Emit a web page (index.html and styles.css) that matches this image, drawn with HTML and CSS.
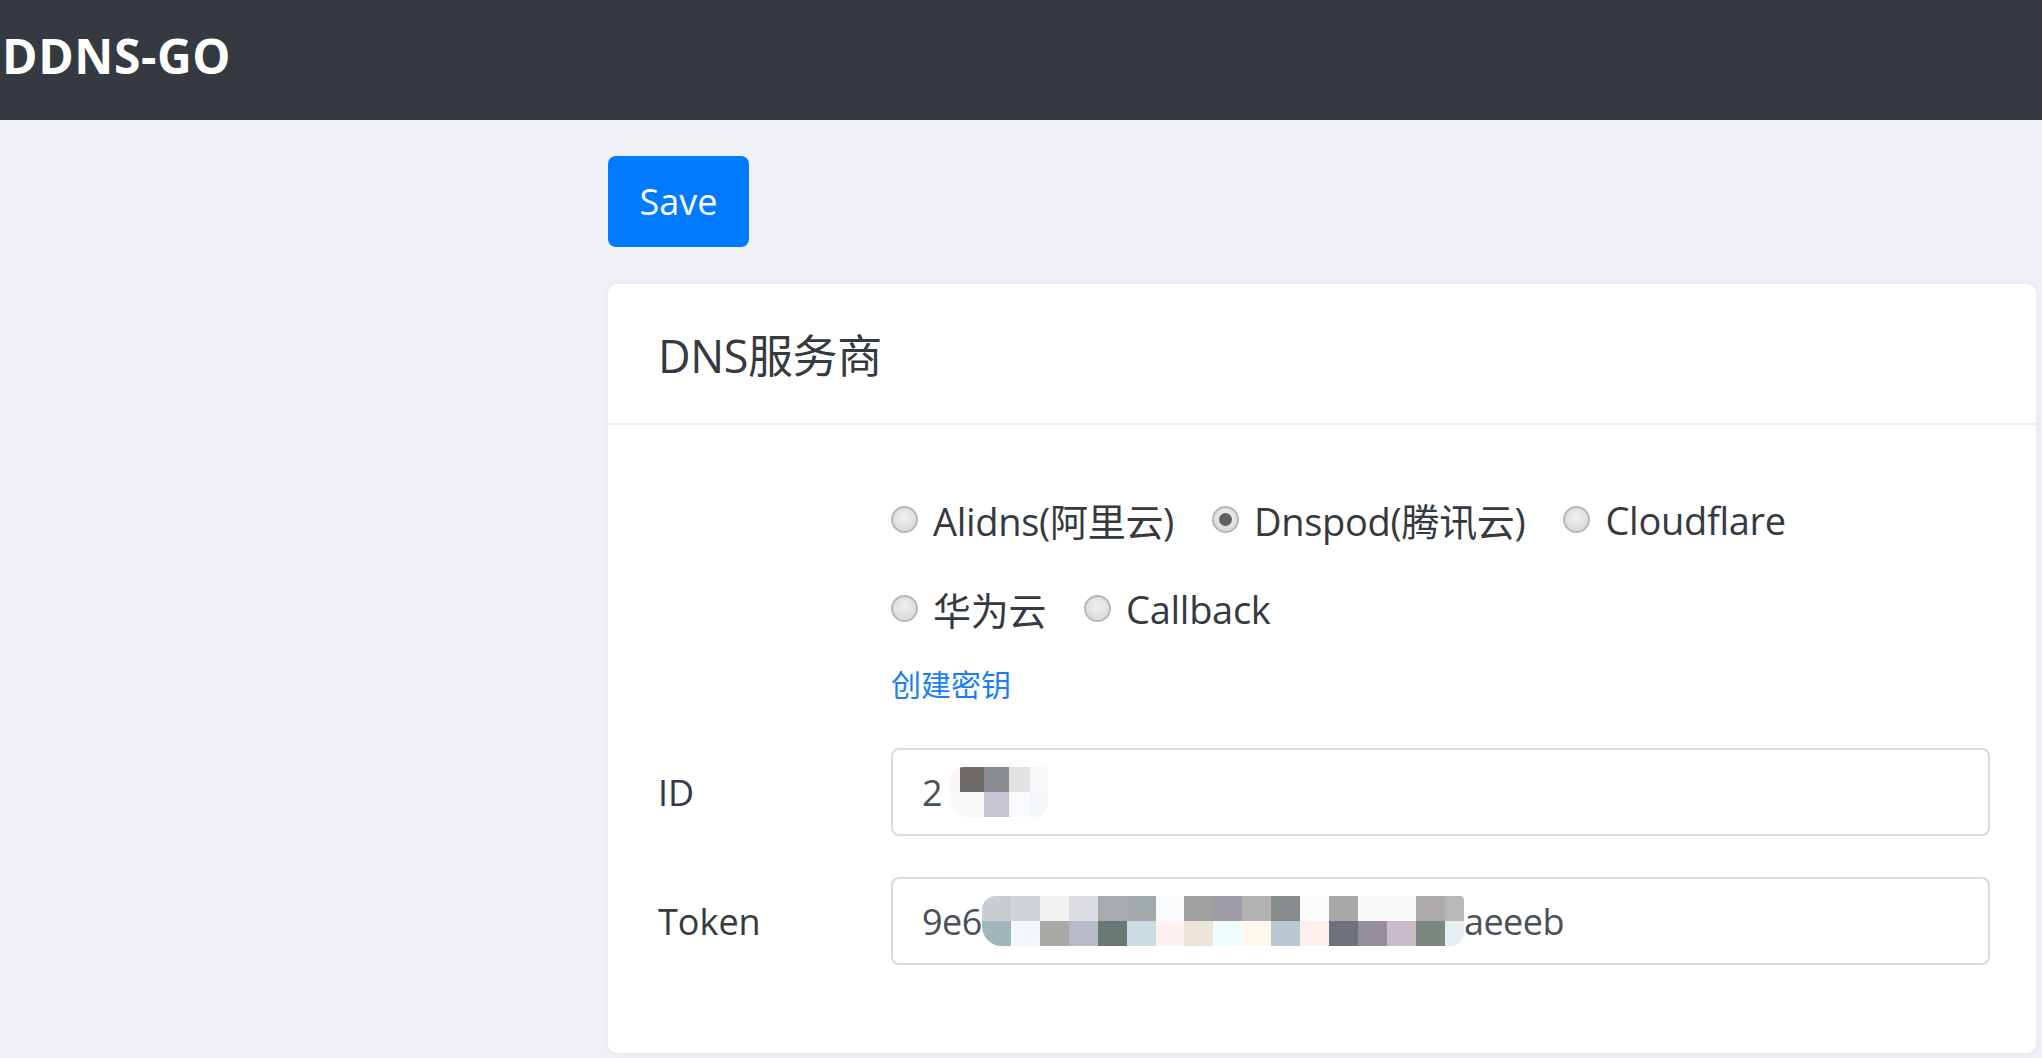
FILE: index.html
```html
<!DOCTYPE html>
<html lang="zh">
<head>
<meta charset="utf-8">
<title>DDNS-GO</title>
<link rel="stylesheet" href="styles.css">
</head>
<body>
<header class="navbar">
  <span class="brand">DDNS-GO</span>
</header>
<main class="main">
  <button class="btn-save" type="button">Save</button>
  <section class="card">
    <div class="card-header">DNS服务商</div>
    <div class="card-body">
      <div class="form-row">
        <div class="label-col"></div>
        <div class="field-col">
          <div class="radios">
            <label class="radio"><input type="radio" name="dns"><span>Alidns(阿里云)</span></label>
            <label class="radio"><input type="radio" name="dns" checked><span>Dnspod(腾讯云)</span></label>
            <label class="radio"><input type="radio" name="dns"><span>Cloudflare</span></label>
            <label class="radio"><input type="radio" name="dns"><span>华为云</span></label>
            <label class="radio"><input type="radio" name="dns"><span>Callback</span></label>
          </div>
          <a class="help-link" href="#">创建密钥</a>
        </div>
      </div>
      <div class="form-row input-row">
        <label class="label-col">ID</label>
        <div class="field-col">
          <div class="input"><span>2</span><span class="mosaic m-id"></span></div>
        </div>
      </div>
      <div class="form-row input-row">
        <label class="label-col">Token</label>
        <div class="field-col">
          <div class="input"><span>9e6</span><span class="mosaic m-token"></span><span>aeeeb</span></div>
        </div>
      </div>
    </div>
  </section>
</main>
</body>
</html>
```
FILE: styles.css
```css
* { box-sizing: border-box; }
html, body { margin: 0; padding: 0; }
body {
  background: #f0f1f6;
  font-family: "Open Sans", "Noto Sans CJK SC", sans-serif;
  color: #212529;
  height: 1058px;
  overflow: hidden;
}
.navbar {
  height: 120px;
  background: #343a40;
  display: flex;
  align-items: center;
  padding-left: 2px;
  padding-bottom: 10px;
}
.brand {
  color: #fff;
  font-family: "Open Sans", "Noto Sans", sans-serif;
  font-weight: 700;
  font-size: 48px;
  letter-spacing: 0.6px;
}
.main {
  padding: 36px 6px 0 608px;
}
.btn-save {
  display: block;
  width: 141px;
  height: 91px;
  border: none;
  border-radius: 8px;
  background: #007bff;
  color: #fff;
  font-family: "Open Sans", sans-serif;
  font-size: 36px;
  padding: 0;
  margin-bottom: 37px;
}
.card {
  background: #fff;
  border-radius: 9px;
  box-shadow: 0 0 6px rgba(40, 40, 80, 0.07);
  height: 769px;
}
.card-header {
  height: 141px;
  border-bottom: 2px solid #eceef3;
  padding-left: 50px;
  display: flex;
  align-items: center;
  font-size: 45px;
  color: #343a40;
  letter-spacing: -0.4px;
}
.card-body {
  padding: 50px 46px 0 50px;
}
.form-row {
  display: flex;
}
.label-col {
  width: 233px;
  flex: none;
  font-size: 36px;
  color: #343a40;
}
.field-col {
  flex: 1;
}
.radios {
  display: flex;
  flex-wrap: wrap;
  width: 960px;
}
.radio {
  display: flex;
  align-items: center;
  height: 89px;
  margin-right: 38px;
  font-size: 38px;
  color: #343a40;
  letter-spacing: -0.3px;
}
.radio input {
  appearance: none;
  -webkit-appearance: none;
  width: 27px;
  height: 27px;
  margin: 0 15px 0 0;
  border-radius: 50%;
  border: 2px solid #b7b7b7;
  background: radial-gradient(circle at 50% 40%, #f0f0f0 0%, #dcdcdc 70%);
  position: relative;
  flex: none;
}
.radio input:checked::after {
  content: "";
  position: absolute;
  left: 5px;
  top: 5px;
  width: 13px;
  height: 13px;
  border-radius: 50%;
  background: #5f5f5f;
}
.help-link {
  display: block;
  height: 40px;
  line-height: 40px;
  margin-top: 12px;
  font-size: 30px;
  color: #1a7ff5;
  text-decoration: none;
}
.input-row {
  align-items: center;
  margin-top: 43px;
}
.input-row + .input-row {
  margin-top: 41px;
}
.input {
  height: 88px;
  border: 2px solid #d7dae0;
  border-radius: 8px;
  display: flex;
  align-items: center;
  padding-left: 29px;
  font-size: 36px;
  color: #495057;
  letter-spacing: -0.5px;
}
.mosaic {
  display: inline-block;
  height: 50px;
  border-radius: 14px 4px 14px 20px;
}
.m-id {
  width: 98px;
  margin-left: 8px;
  background:
    linear-gradient(90deg, #fbf6f4 0 10%, #6e6a67 10% 35%, #888c91 35% 60%, #e2e2e4 60% 82%, #f7f8fa 82%) top / 100% 50% no-repeat,
    linear-gradient(90deg, #f8f8f8 0 35%, #c8c5d2 35% 60%, #fbfbfd 60% 82%, #f5f8fa 82%) bottom / 100% 50% no-repeat;
}
.m-token {
  width: 482px;
  background:
    linear-gradient(90deg, #c9ced3 0 6%, #cfd4d9 6% 12%, #f2f2f2 12% 18%, #dcdde3 18% 24%, #a8abad 24% 30%, #a3aaab 30% 36%, #fafbfd 36% 42%, #a1a1a1 42% 48%, #9e9ba4 48% 54%, #b2b2b2 54% 60%, #858a8d 60% 66%, #fbfbfb 66% 72%, #a8a8a8 72% 78%, #fafafa 78% 90%, #aeaaab 90% 96%, #b8b8b8 96%) top / 100% 50% no-repeat,
    linear-gradient(90deg, #9fb7ba 0 6%, #f3f6fc 6% 12%, #a9a9a5 12% 18%, #b6bbc7 18% 24%, #6a7875 24% 30%, #cbdde2 30% 36%, #fdf1f1 36% 42%, #ebe5d7 42% 48%, #eefdfe 48% 54%, #fff7ea 54% 60%, #b8c7d2 60% 66%, #fdf0ec 66% 72%, #6d727b 72% 78%, #948e99 78% 84%, #c7bcc7 84% 90%, #7b887f 90% 96%, #e8edf2 96%) bottom / 100% 50% no-repeat;
}
```
